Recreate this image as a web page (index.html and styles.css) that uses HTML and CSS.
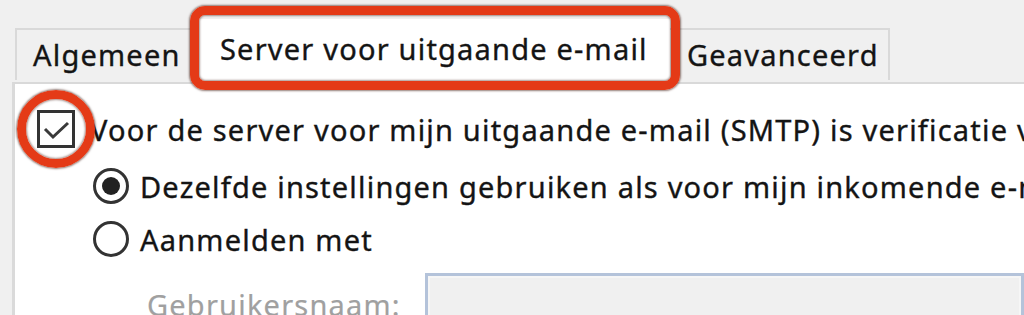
FILE: index.html
```html
<!DOCTYPE html>
<html lang="nl">
<head>
<meta charset="utf-8">
<title>Accountinstellingen</title>
<link rel="stylesheet" href="styles.css">
</head>
<body>
<div class="dialog">
  <div class="tabs">
    <div class="tab tab-first">Algemeen</div>
    <div class="tab tab-active">Server voor uitgaande e-mail<span class="mark-box"></span></div>
    <div class="tab tab-last">Geavanceerd</div>
  </div>
  <div class="panel">
    <div class="row row-check">
      <span class="checkbox">
        <svg viewBox="0 0 38 38" width="38" height="38"><path d="M8 19 L16 27 L31 13" fill="none" stroke="#3a3a3a" stroke-width="3"/></svg>
        <span class="mark-ring"></span>
      </span>
      <span class="label">Voor de server voor mijn uitgaande e-mail (SMTP) is verificatie vereist</span>
    </div>
    <div class="row row-radio">
      <span class="radio radio-on"></span>
      <span class="label">Dezelfde instellingen gebruiken als voor mijn inkomende e-mailserver</span>
    </div>
    <div class="row row-radio">
      <span class="radio"></span>
      <span class="label">Aanmelden met</span>
    </div>
    <div class="row row-field">
      <span class="field-label">Gebruikersnaam:</span>
      <span class="input"></span>
    </div>
  </div>
</div>
</body>
</html>
```
FILE: styles.css
```css
html, body {
  margin: 0;
  padding: 0;
  background: #f0f0f0;
  overflow: hidden;
  width: 1024px;
  height: 315px;
}

.dialog {
  font-family: "Noto Sans", "Open Sans", sans-serif;
  font-size: 29px;
  letter-spacing: 1.2px;
  color: #141414;
  -webkit-text-stroke: 0.35px #141414;
  white-space: nowrap;
}

.tabs {
  display: flex;
  align-items: flex-end;
  padding-top: 18px;
  padding-left: 15px;
  height: 64px;
  position: relative;
  z-index: 2;
}

.tab {
  box-sizing: border-box;
  height: 52px;
  margin-bottom: 2px;
  line-height: 50px;
  background: #f0f0f0;
  border: 2px solid #d9d9d9;
  border-bottom: none;
}

.tab-first {
  width: 184px;
  padding-left: 16px;
  border-right: none;
}

.tab-active {
  position: relative;
  width: 471px;
  height: 64px;
  line-height: 60px;
  background: #fff;
  border: none;
  padding-left: 21px;
  margin-bottom: -1px;
}

.tab-last {
  width: 220px;
  padding-left: 17px;
  border-left: none;
}

.mark-box {
  position: absolute;
  left: -9px;
  right: -10px;
  top: -13px;
  bottom: -7px;
  border: 9px solid #e43a17;
  border-radius: 15px;
  box-shadow: 0 0 2px 1px rgba(60, 20, 10, 0.55), inset 0 0 2px 1px rgba(60, 20, 10, 0.45);
}

.panel {
  margin-left: 12px;
  background: #fff;
  border-left: 3px solid #dadada;
  border-top: 2px solid #d9d9d9;
  height: 250px;
  padding-left: 22px;
  padding-top: 26px;
  box-sizing: border-box;
  position: relative;
  z-index: 1;
}

.row {
  display: flex;
  align-items: center;
}

.row-check {
  height: 38px;
  gap: 15px;
}

.checkbox {
  position: relative;
  width: 38px;
  height: 38px;
  box-sizing: border-box;
  border: 3px solid #333;
  background: #fff;
  flex: none;
}

.checkbox svg {
  position: absolute;
  left: -3px;
  top: -3px;
}

.mark-ring {
  position: absolute;
  left: -23px;
  top: -23px;
  width: 78px;
  height: 78px;
  box-sizing: border-box;
  border: 9px solid #e43a17;
  border-radius: 50%;
  box-shadow: 0 0 2px 1px rgba(60, 20, 10, 0.55), inset 0 0 2px 1px rgba(60, 20, 10, 0.45);
}

.row-radio {
  height: 36px;
  gap: 11px;
  padding-left: 56px;
  margin-top: 20px;
}

.row-radio + .row-radio {
  margin-top: 17px;
}

.radio {
  width: 36px;
  height: 36px;
  box-sizing: border-box;
  border: 3px solid #333;
  border-radius: 50%;
  background: #fff;
  flex: none;
  position: relative;
}

.radio-on::after {
  content: "";
  position: absolute;
  left: 6px;
  top: 6px;
  width: 18px;
  height: 18px;
  border-radius: 50%;
  background: #222;
}

.row-field {
  padding-left: 110px;
  margin-top: 16px;
  align-items: flex-start;
}

.field-label {
  width: 278px;
  flex: none;
  color: #a0a0a0;
  -webkit-text-stroke: 0.2px #a0a0a0;
  padding-top: 12px;
}

.input {
  flex: 1;
  height: 60px;
  box-sizing: border-box;
  border: 3px solid #b4c3da;
  box-shadow: inset 0 0 0 2px #f6f6f6;
  background: #f0f0f0;
}
```
